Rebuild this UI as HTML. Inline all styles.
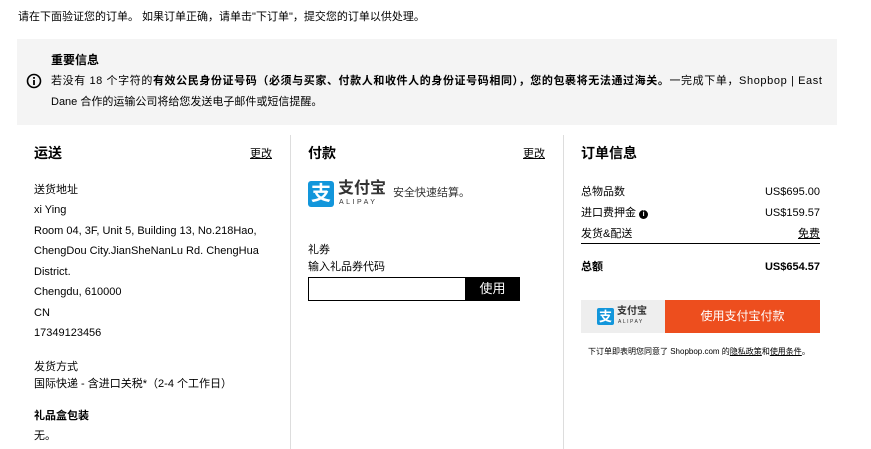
<!DOCTYPE html>
<html><head><meta charset="utf-8"><style>
body{margin:0;width:871px;height:449px;background:#fff;font-family:"Liberation Sans","Noto Sans CJK SC",sans-serif;color:#000;font-size:11px;position:relative;overflow:hidden}
.a{position:absolute;white-space:nowrap;line-height:14px}
.b{font-weight:bold}
.h{font-size:14px;font-weight:bold}
u{text-decoration:underline}
</style></head><body>
<div class="a" style="left:18px;top:10px;font-size:11px">请在下面验证您的订单。 如果订单正确，请单击"下订单"，提交您的订单以供处理。</div>
<div style="position:absolute;left:17px;top:39px;width:820px;height:86px;background:#f4f4f4"></div>
<div class="a b" style="left:51px;top:53px;font-size:12px">重要信息</div>
<svg style="position:absolute;left:26px;top:73px" width="16" height="16" viewBox="0 0 16 16"><circle cx="8" cy="8" r="6.5" fill="none" stroke="#000" stroke-width="1.6"/><rect x="7.1" y="7" width="1.8" height="5" fill="#000"/><rect x="7.1" y="4" width="1.8" height="1.8" fill="#000"/></svg>
<div class="a" style="left:51px;top:74px;letter-spacing:0.6px">若没有 18 个字符的<b>有效公民身份证号码（必须与买家、付款人和收件人的身份证号码相同），您的包裹将无法通过海关。</b>一完成下单，Shopbop | East</div>
<div class="a" style="left:51px;top:95px">Dane 合作的运输公司将给您发送电子邮件或短信提醒。</div>
<div style="position:absolute;left:290px;top:135px;width:1px;height:314px;background:#ddd"></div>
<div style="position:absolute;left:563px;top:135px;width:1px;height:314px;background:#ddd"></div>
<div class="a h" style="left:34px;top:146px">运送</div>
<div class="a" style="left:250px;top:147px"><u>更改</u></div>
<div class="a" style="left:34px;top:183px">送货地址</div>
<div class="a" style="left:34px;top:203px">xi Ying</div>
<div class="a" style="left:34px;top:224px">Room 04, 3F, Unit 5, Building 13, No.218Hao,</div>
<div class="a" style="left:34px;top:244px">ChengDou City.JianSheNanLu Rd. ChengHua</div>
<div class="a" style="left:34px;top:265px">District.</div>
<div class="a" style="left:34px;top:285px">Chengdu, 610000</div>
<div class="a" style="left:34px;top:306px">CN</div>
<div class="a" style="left:34px;top:326px">17349123456</div>
<div class="a" style="left:34px;top:360px">发货方式</div>
<div class="a" style="left:34px;top:377px">国际快递 - 含进口关税*（2-4 个工作日）</div>
<div class="a b" style="left:34px;top:409px">礼品盒包装</div>
<div class="a" style="left:34px;top:429px">无。</div>

<div class="a h" style="left:308px;top:146px">付款</div>
<div class="a" style="left:523px;top:147px"><u>更改</u></div>
<div style="position:absolute;left:308px;top:181px;width:26px;height:26px;background:#1296db;border-radius:3px;color:#fff;font-size:20px;font-weight:bold;text-align:center;line-height:26px">支</div>
<div class="a b" style="left:338px;top:180px;font-size:16px;color:#333;line-height:18px">支付宝</div>
<div class="a" style="left:339px;top:198px;font-size:7px;letter-spacing:2.5px;color:#333;line-height:9px">ALIPAY</div>
<div class="a" style="left:393px;top:186px;color:#333">安全快速结算。</div>
<div class="a" style="left:308px;top:243px">礼券</div>
<div class="a" style="left:308px;top:260px">输入礼品券代码</div>
<div style="position:absolute;left:308px;top:277px;width:157px;height:22px;border:1px solid #000;border-right:none"></div>
<div style="position:absolute;left:465px;top:277px;width:55px;height:24px;background:#000;color:#fff;font-size:13px;text-align:center;line-height:24px">使用</div>

<div class="a h" style="left:581px;top:146px">订单信息</div>
<div class="a" style="left:581px;top:185px">总物品数</div><div class="a" style="right:51px;top:185px">US$695.00</div>
<div class="a" style="left:581px;top:206px">进口费押金 <span style="display:inline-block;width:9px;height:9px;border-radius:50%;background:#000;color:#fff;font-size:7px;line-height:9px;text-align:center;font-weight:bold">i</span></div><div class="a" style="right:51px;top:206px">US$159.57</div>
<div class="a" style="left:581px;top:227px">发货&amp;配送</div><div class="a" style="right:51px;top:227px"><u>免费</u></div>
<div style="position:absolute;left:581px;top:243px;width:239px;height:1px;background:#000"></div>
<div class="a b" style="left:581px;top:260px">总额</div><div class="a b" style="right:51px;top:260px">US$654.57</div>
<div style="position:absolute;left:581px;top:300px;width:84px;height:33px;background:#eeeeee"></div>
<div style="position:absolute;left:597px;top:308px;width:17px;height:17px;background:#1296db;border-radius:2px;color:#fff;font-size:13px;font-weight:bold;text-align:center;line-height:17px">支</div>
<div class="a b" style="left:617px;top:306px;font-size:10px;color:#333;line-height:12px">支付宝</div>
<div class="a" style="left:618px;top:319px;font-size:5px;letter-spacing:1.5px;color:#333;line-height:6px">ALIPAY</div>
<div style="position:absolute;left:665px;top:300px;width:155px;height:33px;background:#ed4e1e;color:#fff;font-size:12px;text-align:center;line-height:33px">使用支付宝付款</div>
<div class="a" style="left:588px;top:345px;font-size:8px">下订单即表明您同意了 Shopbop.com 的<u>隐私政策</u>和<u>使用条件</u>。</div>
</body></html>
